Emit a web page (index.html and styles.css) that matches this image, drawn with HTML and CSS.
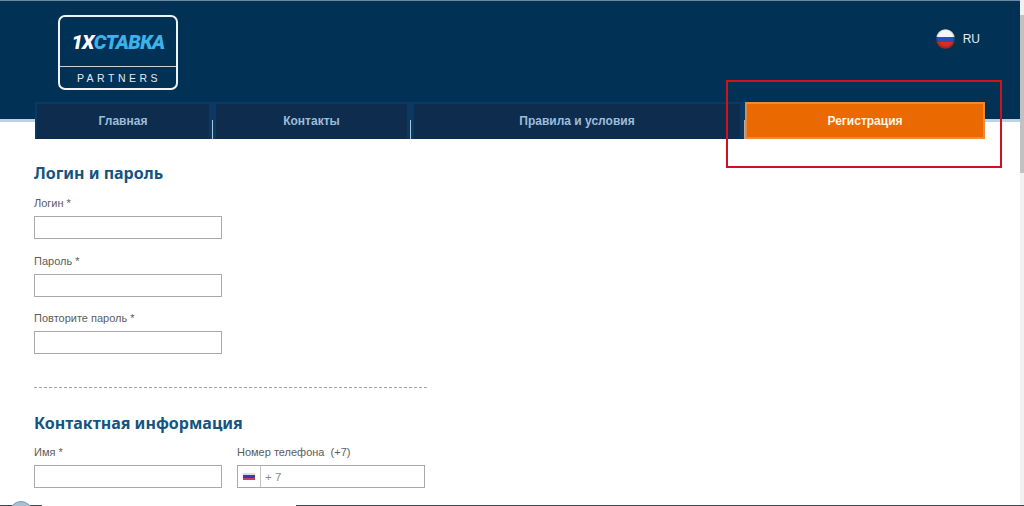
FILE: index.html
```html
<!DOCTYPE html>
<html lang="ru">
<head>
<meta charset="utf-8">
<title>1xСтавка Partners</title>
<link rel="stylesheet" href="styles.css">
</head>
<body>
<div class="page">
  <header class="header">
    <div class="header-top">
      <div class="logo">
        <div class="logo-main"><span class="logo-x">1X</span><span class="logo-name">СТАВКА</span></div>
        <div class="logo-sub">PARTNERS</div>
      </div>
      <div class="lang">
        <svg class="lang-flag" width="19" height="20" viewBox="0 0 19 20" aria-hidden="true">
          <defs>
            <clipPath id="globe"><ellipse cx="9.5" cy="10" rx="9.4" ry="9.8"/></clipPath>
            <radialGradient id="shade" cx=".5" cy=".45" r=".6">
              <stop offset=".6" stop-color="#000" stop-opacity="0"/>
              <stop offset="1" stop-color="#000" stop-opacity=".4"/>
            </radialGradient>
          </defs>
          <g clip-path="url(#globe)">
            <rect width="19" height="8" fill="#f6f6f8"/>
            <rect y="8" width="19" height="5" fill="#2a50b8"/>
            <rect y="13" width="19" height="7" fill="#d3302a"/>
            <rect width="19" height="20" fill="url(#shade)"/>
          </g>
        </svg>
        <span class="lang-code">RU</span>
      </div>
    </div>
    <nav class="nav">
      <a class="nav-item nav-home">Главная</a>
      <span class="nav-sep"></span>
      <a class="nav-item nav-contacts">Контакты</a>
      <span class="nav-sep"></span>
      <a class="nav-item nav-rules">Правила и условия</a>
      <span class="nav-sep nav-sep-last"></span>
      <a class="nav-item nav-register">Регистрация</a>
    </nav>
  </header>
  <main class="content">
    <h2 class="section-title">Логин и пароль</h2>
    <div class="field">
      <label class="field-label">Логин *</label>
      <div class="input"></div>
    </div>
    <div class="field">
      <label class="field-label">Пароль *</label>
      <div class="input"></div>
    </div>
    <div class="field">
      <label class="field-label">Повторите пароль *</label>
      <div class="input"></div>
    </div>
    <hr class="divider">
    <h2 class="section-title">Контактная информация</h2>
    <div class="field-row">
      <div class="field">
        <label class="field-label">Имя *</label>
        <div class="input"></div>
      </div>
      <div class="field">
        <label class="field-label">Номер телефона&nbsp; (+7)</label>
        <div class="input input-phone">
          <span class="phone-flag"><span class="mini-flag"></span></span>
          <span class="phone-code">+ 7</span>
        </div>
      </div>
    </div>
  </main>
</div>
<div class="scrollbar"><div class="scrollbar-thumb"></div></div>
<div class="highlight"></div>
<div class="edge edge-left"></div>
<div class="edge edge-right"></div>
<div class="edge-bubble"></div>
</body>
</html>
```
FILE: styles.css
```css
* { box-sizing: border-box; }
html, body { margin: 0; padding: 0; height: 506px; overflow: hidden; background: #fff; }
body { font-family: "Noto Sans", "Liberation Sans", sans-serif; color: #555; }

.page { width: 1020px; }

.header {
  height: 122px;
  background: #023156;
  border-top: 1px solid #6f8ba3;
  border-bottom: 3px solid #bcd3e6;
  padding: 0 0 0 35px;
}
.header-top {
  height: 101px;
  display: flex;
  justify-content: space-between;
  align-items: flex-start;
}
.logo {
  width: 120px;
  height: 75px;
  margin: 14px 0 0 23px;
  border: 2px solid #eef3f7;
  border-radius: 7px;
  display: flex;
  flex-direction: column;
}
.logo-main {
  height: 50px;
  border-bottom: 1px solid #c4d2dd;
  display: flex;
  align-items: center;
  justify-content: center;
  font-family: "Roboto", "Liberation Sans", sans-serif;
  font-weight: 900;
  font-style: italic;
  font-size: 20px;
  letter-spacing: -0.7px;
}
.logo-x { color: #fff; }
.logo-name { color: #39b3ea; }
.logo-sub {
  flex: 1;
  display: flex;
  align-items: center;
  justify-content: center;
  color: #e3eaf0;
  font-family: "Liberation Sans", sans-serif;
  font-size: 10.5px;
  letter-spacing: 3.5px;
  padding-left: 2px;
}
.lang {
  display: flex;
  align-items: center;
  gap: 8px;
  margin: 28px 40px 0 0;
}
.lang-code { color: #e6edf3; font-size: 12px; font-family: "Liberation Sans", sans-serif; }

.nav {
  display: flex;
  height: 37px;
  width: 950px;
}
.nav-item {
  display: flex;
  align-items: center;
  justify-content: center;
  height: 37px;
  background: #0e2d4e;
  border: 2px solid #0a3a64;
  border-bottom-color: #0e2d4e;
  color: #9bbdd9;
  font-family: "Liberation Sans", sans-serif;
  font-weight: 700;
  font-size: 12px;
}
.nav-sep {
  width: 3px;
  background:
    linear-gradient(#0a3a64 0 18px, #a9c6dc 18px) center / 1px 100% no-repeat,
    #0a3a64;
}
.nav-sep-last {
  background:
    linear-gradient(#0a3a64 0 18px, #c8a88a 18px) right / 1px 100% no-repeat,
    #0a3a64;
}
.nav-home { width: 176px; }
.nav-contacts { width: 195px; }
.nav-rules { width: 330px; }
.nav-register {
  width: 240px;
  background: #ea6900;
  border: 2px solid #ee8a35;
  border-left-color: #d98a4c;
  color: #fff5e8;
}

.content { padding: 41px 0 0 34px; }
.section-title {
  margin: 0;
  font-family: "Noto Sans", "DejaVu Sans", sans-serif;
  font-size: 16px;
  line-height: 20px;
  font-weight: 700;
  color: #14547f;
}
.field { width: 188px; }
.content > .field { margin-bottom: 15.5px; }
.section-title + .field { margin-top: 14px; }
.field-label {
  display: block;
  height: 16px;
  font-family: "Liberation Sans", "DejaVu Sans", sans-serif;
  font-size: 11px;
  line-height: 12px;
  color: #5c5c5c;
  margin-bottom: 3px;
}
.input {
  height: 23px;
  border: 1px solid #a9a9a9;
  background: #fff;
}
.divider {
  width: 393px;
  height: 0;
  margin: 33px 0 25px;
  border: 0;
  border-top: 1px dashed #a5a5a5;
}
.field-row { display: flex; gap: 15px; margin-top: 13px; }
.input-phone { display: flex; align-items: stretch; }
.phone-flag {
  width: 23px;
  border-right: 1px solid #c4c4c4;
  display: flex;
  align-items: center;
  justify-content: center;
}
.mini-flag {
  width: 12px;
  height: 7px;
  background: linear-gradient(#dcdcec 0 33%, #3a3ba8 33% 66%, #c7415f 66%);
}
.phone-code {
  padding-left: 4px;
  font-family: "Liberation Sans", "DejaVu Sans", sans-serif;
  font-size: 11.5px;
  line-height: 22px;
  color: #888;
}

.scrollbar {
  position: absolute;
  top: 0;
  right: 0;
  width: 4px;
  height: 506px;
  background: #f1f1f1;
}
.scrollbar-thumb { height: 158px; margin-top: 15px; background: #c1c1c1; }

.highlight {
  position: absolute;
  left: 726px;
  top: 80px;
  width: 276px;
  height: 88px;
  border: 2px solid #cf1120;
}
.edge { position: absolute; bottom: 0; height: 1px; background: #3d4a52; }
.edge-left { left: 0; width: 42px; }
.edge-right { left: 296px; right: 0; }
.edge-bubble {
  position: absolute;
  left: 9px;
  top: 501px;
  width: 24px;
  height: 24px;
  border-radius: 50%;
  background: #a9c0d2;
  border: 1px solid #7f9cb3;
}
```
